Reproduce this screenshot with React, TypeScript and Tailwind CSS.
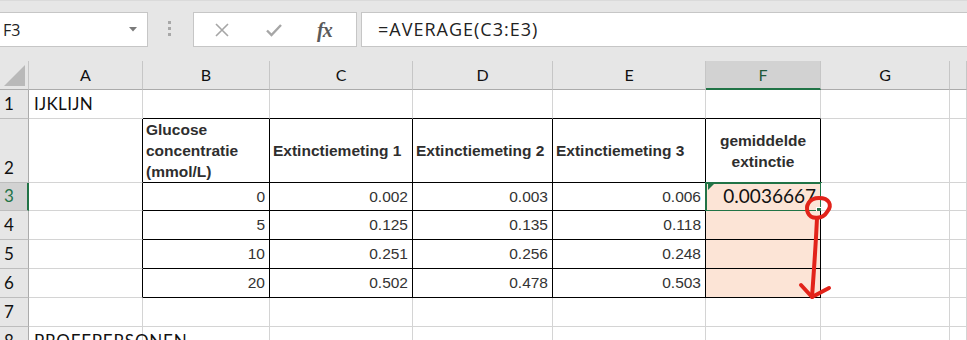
import React from "react";

const cols = ["A", "B", "C", "D", "E", "F", "G", ""];

const rowHeights: Record<number, string> = {
  1: "h-[29px]",
  2: "h-[64px]",
  3: "h-[28px]",
  4: "h-[29px]",
  5: "h-[29px]",
  6: "h-[29px]",
  7: "h-[29px]",
  8: "h-[29px]",
};

const values: Record<number, string[]> = {
  3: ["0", "0.002", "0.003", "0.006"],
  4: ["5", "0.125", "0.135", "0.118"],
  5: ["10", "0.251", "0.256", "0.248"],
  6: ["20", "0.502", "0.478", "0.503"],
};

const headerText = "font-['Liberation_Sans',Arial,sans-serif] font-bold text-[15.5px] leading-[21px] text-[#2e2e2e]";
const numText = "font-['Liberation_Sans',Arial,sans-serif] text-[15.5px] text-[#333333]";

const borderClasses = (r: number, c: number) => {
  const right = r >= 2 && r <= 6 && c <= 5 ? "border-r-black" : "border-r-[#d4d4d4]";
  const bottom = r <= 6 && c >= 1 && c <= 5 ? "border-b-black" : "border-b-[#d4d4d4]";
  return `border-r border-b ${right} ${bottom}`;
};

const CellContent = ({ r, c }: { r: number; c: number }) => {
  if (c === 0 && r === 1)
    return <span className="pl-[5px] self-center text-[17px] tracking-[0.3px] text-[#111]">IJKLIJN</span>;
  if (c === 0 && r === 8)
    return (
      <span className="relative z-10 pl-[5px] pt-[4px] self-start whitespace-nowrap text-[17px] tracking-[0.8px] leading-[20px] text-[#111]">
        PROEFPERSONEN
      </span>
    );
  if (r === 2) {
    if (c === 1)
      return (
        <span className={`${headerText} pl-[3px] self-center`}>
          Glucose
          <br />
          concentratie
          <br />
          (mmol/L)
        </span>
      );
    if (c >= 2 && c <= 4)
      return <span className={`${headerText} pl-[3px] self-center whitespace-nowrap`}>Extinctiemeting {c - 1}</span>;
    if (c === 5)
      return (
        <span className={`${headerText} w-full text-center self-center`}>
          gemiddelde
          <br />
          extinctie
        </span>
      );
  }
  if (values[r] && c >= 1 && c <= 4)
    return <span className={`${numText} w-full text-right pr-[4px] self-center`}>{values[r][c - 1]}</span>;
  if (r === 3 && c === 5)
    return <span className="w-full text-right pr-[4px] self-center text-[19px] text-[#111]">0.0036667</span>;
  return null;
};

const FormulaBar = () => (
  <div className="h-[61px] bg-[#e6e6e6] flex items-start pt-[11px] border-t border-t-[#dadada]">
    <div className="w-[148px] h-[35px] bg-white border border-l-0 border-[#c6c6c6] flex items-center justify-between pl-[3px] pr-[10px]">
      <span className="font-['Open_Sans',sans-serif] text-[16px] text-[#222]">F3</span>
      <svg width="8" height="5" viewBox="0 0 8 5">
        <path d="M0 0 L8 0 L4 4.5 Z" fill="#7a7a7a" />
      </svg>
    </div>
    <div className="ml-[20px] mt-[9px] flex flex-col gap-[3px]">
      <div className="w-[3px] h-[3px] bg-[#a8a8a8]" />
      <div className="w-[3px] h-[3px] bg-[#a8a8a8]" />
      <div className="w-[3px] h-[3px] bg-[#a8a8a8]" />
    </div>
    <div className="ml-[22px] w-[164px] h-[35px] bg-white border border-[#c6c6c6] flex items-center">
      <svg className="ml-[20px]" width="16" height="16" viewBox="0 0 16 16">
        <path d="M2 2 L14 14 M14 2 L2 14" stroke="#a6a6a6" strokeWidth="1.6" />
      </svg>
      <svg className="ml-[35px]" width="18" height="16" viewBox="0 0 18 16">
        <path d="M2 8.5 L6.5 13 L16 3" stroke="#a6a6a6" strokeWidth="2.4" fill="none" />
      </svg>
      <span className="ml-[34px] font-['Liberation_Serif',serif] italic font-bold text-[20px] text-[#5a5a5a] tracking-[-1px]">
        fx
      </span>
    </div>
    <div className="ml-[4px] flex-1 h-[35px] bg-white border border-r-0 border-[#c6c6c6] flex items-center pl-[16px]">
      <span className="font-['Open_Sans',sans-serif] text-[18px] tracking-[1px] text-[#222]">=AVERAGE(C3:E3)</span>
    </div>
  </div>
);

export default function App() {
  const rows = [1, 2, 3, 4, 5, 6, 7, 8];
  return (
    <div className="w-[967px] h-[340px] overflow-hidden bg-white relative font-['Lato',sans-serif]">
      <FormulaBar />
      <div className="grid grid-cols-[29px_114px_127px_143px_140px_153px_115px_129px_1fr]">
        {/* column header row */}
        <div className="h-[29px] bg-[#e6e6e6] border-r border-b border-r-[#c6c6c6] border-b-[#ababab] relative">
          <svg className="absolute left-[4px] top-[4px]" width="22" height="22" viewBox="0 0 22 22">
            <path d="M21 0 L21 21 L0 21 Z" fill="#b9b9b9" />
          </svg>
        </div>
        {cols.map((col, i) => (
          <div
            key={col + i}
            className={
              col === "F"
                ? "h-[29px] bg-[#d2d2d2] border-r border-r-[#c6c6c6] border-b-2 border-b-[#217346] flex items-center justify-center text-[16px] text-[#1e5a3a]"
                : "h-[29px] bg-[#e6e6e6] border-r border-b border-r-[#c6c6c6] border-b-[#ababab] flex items-center justify-center text-[16px] text-[#111]"
            }
          >
            {col}
          </div>
        ))}

        {rows.map((r) => (
          <React.Fragment key={r}>
            <div
              className={
                r === 3
                  ? `${rowHeights[r]} bg-[#d2d2d2] border-r-2 border-b border-r-[#217346] border-b-[#bdbdbd] flex items-end pl-[4px] pb-[2px] text-[17px] text-[#217346]`
                  : `${rowHeights[r]} bg-[#e6e6e6] border-r border-b border-r-[#ababab] border-b-[#bdbdbd] flex items-end pl-[4px] pb-[2px] text-[17px] text-[#111]`
              }
            >
              {r}
            </div>
            {cols.map((_, c) => {
              const fill = c === 5 && r >= 3 && r <= 6 ? "bg-[#fce4d6]" : "bg-white";
              return (
                <div key={c} className={`${rowHeights[r]} ${fill} ${borderClasses(r, c)} flex relative`}>
                  <CellContent r={r} c={c} />
                  {r === 3 && c === 5 && (
                    <>
                      <div className="absolute -left-px -top-px w-[117px] h-[30px] border-2 border-[#217346]" />
                      <div className="absolute left-[2px] top-[1px] w-0 h-0 border-t-[6px] border-r-[6px] border-t-[#217346] border-r-transparent" />
                      <div className="absolute left-[110px] top-[24px] w-[7px] h-[7px] bg-[#217346] border border-white" />
                    </>
                  )}
                </div>
              );
            })}
          </React.Fragment>
        ))}
      </div>

      {/* red hand-drawn annotation */}
      <svg className="absolute left-0 top-0 pointer-events-none" width="967" height="340" viewBox="0 0 967 340">
        <path
          d="M827 212 C 833 205, 829 198, 819 198 C 809 198, 805 206, 808 213 C 811 220, 823 219, 827 212"
          stroke="#e2231a"
          strokeWidth="4"
          fill="none"
          strokeLinecap="round"
        />
        <path d="M817 218 C 816 240, 814 270, 812 297" stroke="#e2231a" strokeWidth="4" fill="none" strokeLinecap="round" />
        <path d="M801 285 L812 297 L829 288" stroke="#e2231a" strokeWidth="4" fill="none" strokeLinecap="round" strokeLinejoin="round" />
      </svg>
    </div>
  );
}
